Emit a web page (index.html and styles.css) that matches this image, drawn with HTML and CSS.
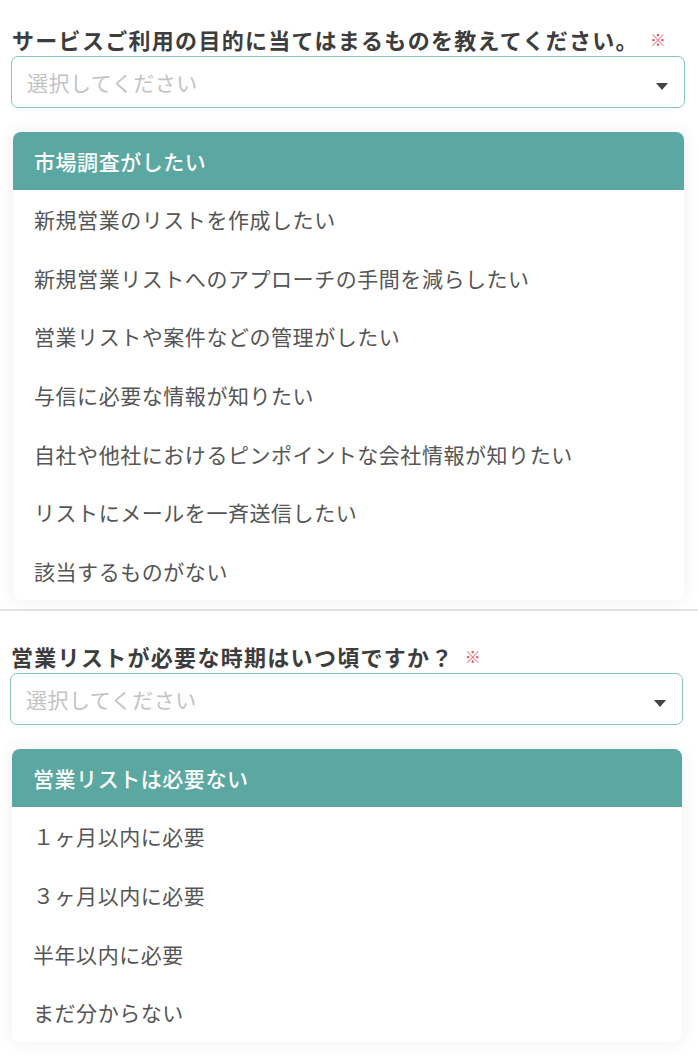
FILE: index.html
```html
<!DOCTYPE html>
<html lang="ja">
<head>
<meta charset="utf-8">
<link rel="stylesheet" href="styles.css">
</head>
<body>
<section class="field field-first">
  <div class="label">サービスご利用の目的に当てはまるものを教えてください。<span class="req">※</span></div>
  <div class="select">
    <span class="placeholder">選択してください</span>
    <span class="arrow"></span>
  </div>
  <ul class="panel">
    <li class="opt active">市場調査がしたい</li>
    <li class="opt">新規営業のリストを作成したい</li>
    <li class="opt">新規営業リストへのアプローチの手間を減らしたい</li>
    <li class="opt">営業リストや案件などの管理がしたい</li>
    <li class="opt">与信に必要な情報が知りたい</li>
    <li class="opt">自社や他社におけるピンポイントな会社情報が知りたい</li>
    <li class="opt">リストにメールを一斉送信したい</li>
    <li class="opt">該当するものがない</li>
  </ul>
</section>
<hr class="sep">
<section class="field field-second">
  <div class="label">営業リストが必要な時期はいつ頃ですか？<span class="req">※</span></div>
  <div class="select">
    <span class="placeholder">選択してください</span>
    <span class="arrow"></span>
  </div>
  <ul class="panel">
    <li class="opt active">営業リストは必要ない</li>
    <li class="opt">１ヶ月以内に必要</li>
    <li class="opt">３ヶ月以内に必要</li>
    <li class="opt">半年以内に必要</li>
    <li class="opt">まだ分からない</li>
  </ul>
</section>
</body>
</html>
```

FILE: styles.css
```css
html, body {
  margin: 0;
  padding: 0;
  background: #ffffff;
}
body {
  font-family: "Noto Sans CJK JP", "Noto Sans", sans-serif;
  color: #555;
  width: 698px;
  height: 1058px;
  overflow: hidden;
}
.field {
  padding: 0 13px 0 11px;
}
.field-first {
  padding-top: 24px;
  padding-bottom: 9px;
}
.field-second {
  padding-top: 30px;
  padding-left: 10px;
  padding-right: 15px;
}
.label {
  font-size: 22px;
  font-weight: 700;
  letter-spacing: 1.3px;
  line-height: 30px;
  height: 30px;
  color: #3d3d3d;
  padding-left: 1px;
  white-space: nowrap;
  display: flex;
  align-items: center;
}
.req {
  color: #e2566a;
  font-size: 16px;
  font-weight: 400;
  margin-left: 11px;
  letter-spacing: 0;
}
.select {
  margin-top: 2px;
  height: 52px;
  box-sizing: border-box;
  border: 1px solid #86c7be;
  border-radius: 7px;
  background: #fff;
  display: flex;
  align-items: center;
  justify-content: space-between;
  padding: 0 16px 0 15px;
}
.placeholder {
  font-size: 21px;
  letter-spacing: 0.5px;
  color: #c3c3c3;
  margin-top: -1px;
}
.arrow {
  width: 0;
  height: 0;
  border-left: 6px solid transparent;
  border-right: 6px solid transparent;
  border-top: 7px solid #444;
  margin-top: 8px;
}
.panel {
  list-style: none;
  margin: 24px 1px 0 2px;
  padding: 0;
  background: #fff;
  border-radius: 8px;
  box-shadow: 0 0 18px rgba(0, 0, 0, 0.07);
  overflow: hidden;
}
.opt {
  height: 58.6px;
  display: flex;
  align-items: center;
  padding: 0 21px;
  font-size: 21px;
  letter-spacing: 0.55px;
  color: #555;
  white-space: nowrap;
}
.opt.active {
  background: #5ba7a1;
  color: #fff;
  font-weight: 500;
  height: 58px;
}
.sep {
  margin: 0;
  border: 0;
  height: 2px;
  background: #e2e2e2;
}
```
